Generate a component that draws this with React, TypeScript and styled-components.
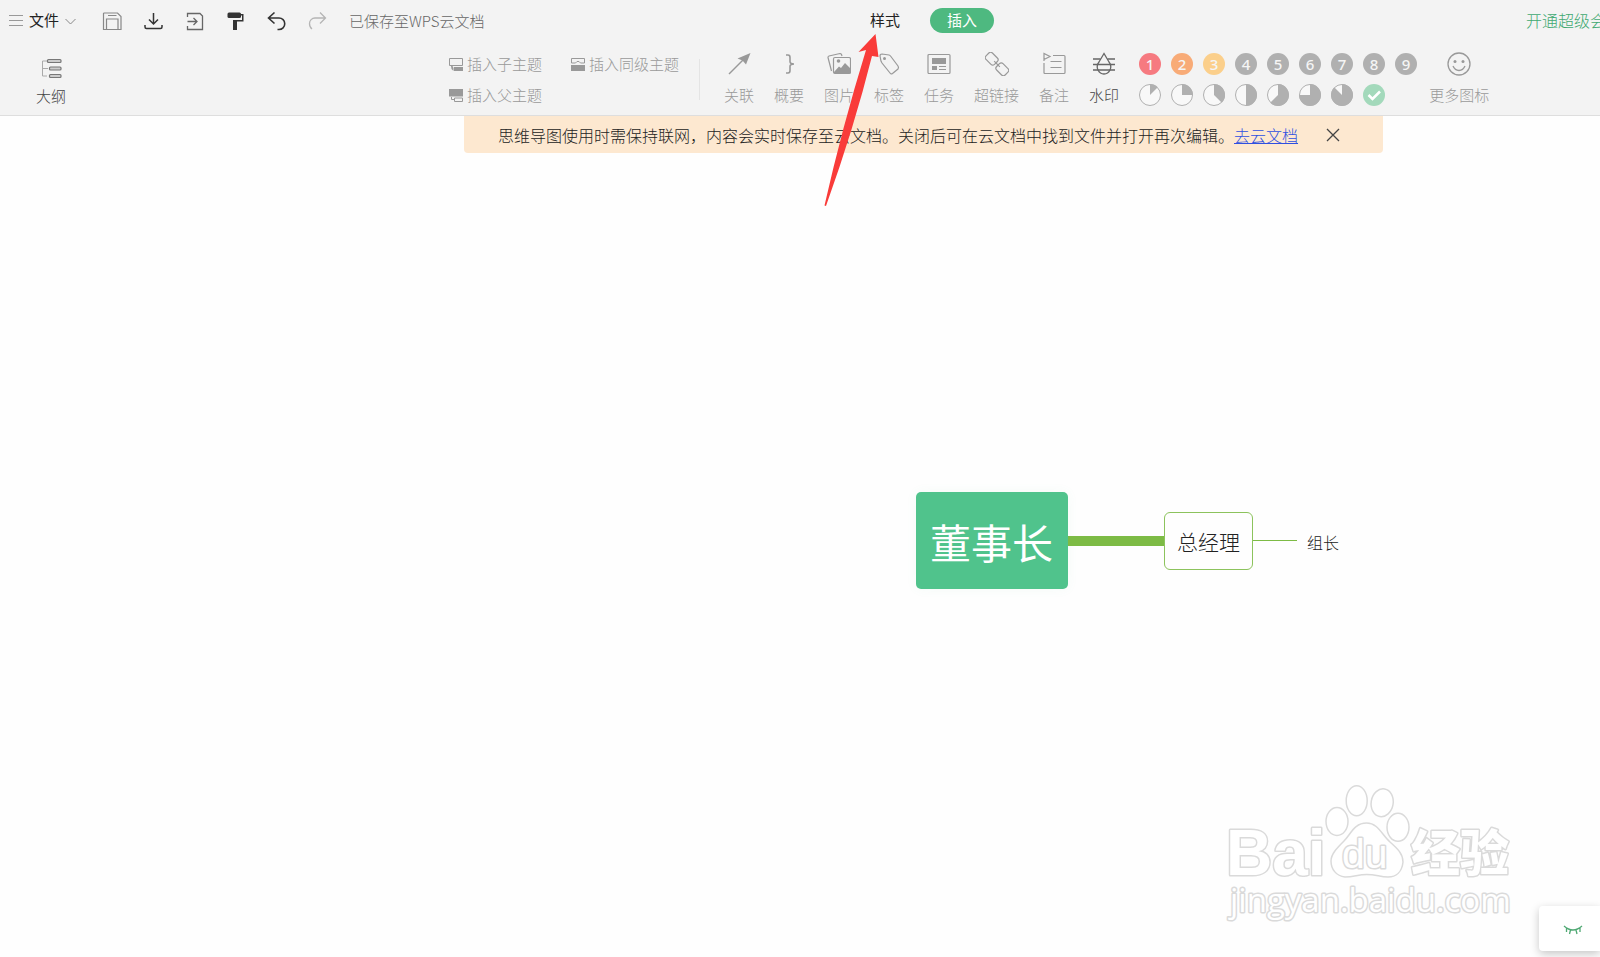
import React from "react";
import styled, { createGlobalStyle } from "styled-components";

const GlobalStyle = createGlobalStyle`
  *, *::before, *::after { box-sizing: border-box; }
  body {
    margin: 0;
    background: #fefefe;
    font-family: "Noto Sans CJK SC", "Liberation Sans", sans-serif;
    font-size: 15px;
    line-height: 20px;
    font-weight: 300;
    color: #222;
  }
  button {
    font: inherit;
    color: inherit;
    background: none;
    border: 0;
    padding: 0;
    cursor: pointer;
    white-space: nowrap;
  }
  svg { display: block; flex: none; }
`;

const Page = styled.div`
  position: relative;
  display: flex;
  flex-direction: column;
  min-height: 100vh;
  overflow: hidden;
`;

const Header = styled.header`
  background: #f3f3f3;
  border-bottom: 1px solid #dedede;
`;

const TopBar = styled.div`
  display: flex;
  align-items: center;
  height: 42px;
`;

const TopLeft = styled.div`
  display: flex;
  align-items: center;
  flex: 0 0 870px;
  padding-left: 8px;
`;

const FileMenu = styled.button`
  display: flex;
  align-items: center;
  gap: 6px;
  width: 94px;
  margin-bottom: 2px;
  color: #222;
  font-weight: 400;
`;

const QuickActions = styled.div`
  display: flex;
  gap: 21px;
`;

const QuickButton = styled.button<{ $muted?: boolean }>`
  color: ${(p) => (p.$muted ? "#b5b5b5" : "#333")};
`;

const SaveStatus = styled.span`
  margin-left: 22px;
  color: #666;
  white-space: nowrap;
`;

const Tabs = styled.nav`
  display: flex;
  align-items: center;
  gap: 30px;
  flex: 1;
  color: #222;
`;

const Tab = styled.button<{ $active?: boolean }>`
  height: 25px;
  padding: 0 ${(p) => (p.$active ? "17px" : "0")};
  margin-bottom: 2px;
  border-radius: 13px;
  font-weight: 400;
  background: ${(p) => (p.$active ? "#4eb980" : "none")};
  color: ${(p) => (p.$active ? "#fff" : "#222")};
`;

const Upgrade = styled.a`
  flex: none;
  width: 74px;
  margin-bottom: 2px;
  color: #3fa971;
  font-size: 16px;
  text-decoration: none;
  white-space: nowrap;
`;

const Toolbar = styled.div`
  display: flex;
  align-items: flex-start;
  height: 73px;
  padding-top: 10px;
  color: #999;
`;

const OutlineArea = styled.div`
  flex: 0 0 449px;
  padding: 4px 0 0 36px;
`;

const Tool = styled.button<{ $strong?: boolean; $gap?: number }>`
  display: flex;
  flex-direction: column;
  align-items: center;
  gap: ${(p) => p.$gap ?? 9}px;
  color: ${(p) => (p.$strong ? "#444" : "#999")};
`;

const InsertGroup = styled.div`
  display: grid;
  grid-template-columns: 122px auto;
  row-gap: 11px;
  flex: 0 0 250px;
  padding-top: 2px;
`;

const InsertButton = styled.button`
  display: flex;
  align-items: center;
  gap: 3px;
`;

const ToolGroup = styled.div`
  display: flex;
  gap: 20px;
  padding-left: 25px;
  position: relative;
  &::before {
    content: "";
    position: absolute;
    left: 0;
    top: 7px;
    height: 41px;
    border-left: 1px solid #e4e4e4;
  }
`;

const Markers = styled.div`
  display: grid;
  grid-template-columns: repeat(9, 22px);
  gap: 9px 10px;
  margin: 0 12px 0 20px;
  padding-top: 1px;
`;

const Marker = styled.button<{ $color?: string }>`
  display: grid;
  place-items: center;
  width: 22px;
  height: 22px;
  border-radius: 50%;
  background: ${(p) => p.$color ?? "none"};
  color: #f5f5f5;
  font-family: "Noto Sans", sans-serif;
  font-weight: 500;
`;

const Canvas = styled.main`
  position: relative;
  flex: 1;
`;

const Notice = styled.div`
  display: flex;
  align-items: center;
  width: 919px;
  height: 37px;
  margin-left: 464px;
  padding-left: 34px;
  background: #fde8d0;
  border-radius: 0 0 4px 4px;
  font-size: 16px;
  white-space: nowrap;
`;

const NoticeLink = styled.a`
  color: #2f50e0;
`;

const CloseButton = styled.button`
  margin-left: 28px;
  color: #444;
`;

const MindMap = styled.div`
  position: absolute;
  left: 916px;
  top: 376px;
  display: flex;
  align-items: center;
`;

const RootNode = styled.div`
  padding: 25px 15px 23px 14px;
  border-radius: 5px;
  background: #50c38c;
  color: #fff;
  font-size: 41px;
  line-height: 49px;
  font-weight: 400;
  box-shadow: 0 0 12px rgba(80, 195, 140, 0.06);
`;

const ChildNode = styled.div`
  padding: 17px 12px;
  border: 1px solid #8cc35c;
  border-radius: 6px;
  font-size: 21px;
  line-height: 22px;
`;

const LeafNode = styled.div`
  font-size: 16px;
  padding: 2px 0 0 10px;
`;

const Branch = styled.div<{ $width: number; $thick: number }>`
  width: ${(p) => p.$width}px;
  height: ${(p) => p.$thick}px;
  background: #7dbb45;
`;

const Pointer = styled.svg`
  position: absolute;
  left: 820px;
  top: 30px;
  pointer-events: none;
`;

const Watermark = styled.svg`
  position: absolute;
  right: 80px;
  bottom: 22px;
`;

const ViewToggle = styled.button`
  position: absolute;
  right: 0;
  bottom: 6px;
  display: grid;
  place-items: center;
  width: 61px;
  height: 45px;
  padding-left: 6px;
  border-radius: 4px 0 0 4px;
  background: #fff;
  color: #4fa873;
  box-shadow: 0 3px 10px rgba(0, 0, 0, 0.22);
`;

type IconProps = { size?: number; h?: number; sw?: number; children: React.ReactNode };

const Icon = ({ size = 24, h, sw = 1, children }: IconProps) => (
  <svg
    width={size}
    height={h ?? size}
    viewBox={`0 0 ${size} ${h ?? size}`}
    fill="none"
    stroke="currentColor"
    strokeWidth={sw}
    aria-hidden="true"
  >
    {children}
  </svg>
);

const quickActions = [
  {
    label: "保存",
    icon: (
      <g stroke="#888" strokeWidth="1.200">
        <path d="M2 2H15.500l3.500 3.500V18.500H1.500V2.500Z" />
        <path d="M4.500 18.500V8H16V18.500M6 4.500h8.500" />
      </g>
    ),
  },
  {
    label: "下载",
    icon: <path strokeWidth="1.500" d="M10.500 2v11M6 8.500l4.500 4.500L15 8.500M2 14v2q0 1.500 1.500 1.500h14q1.500 0 1.500-1.500v-2" />,
  },
  {
    label: "导出",
    icon: (
      <g stroke="#666" strokeWidth="1.300">
        <path d="M3.500 6V2.500H16L18.500 5v13.500H3.500V15M3.500 10.500h9M9.500 7l3.500 3.500L9.500 14" />
      </g>
    ),
  },
  {
    label: "格式刷",
    icon: (
      <g stroke="none" fill="currentColor">
        <rect x="2.500" y="1.500" width="13.500" height="5.500" rx="1.500" />
        <path d="M15 3h3.500v7.500H12v8.500H8V9h9V4.500H15Z" />
      </g>
    ),
  },
  {
    label: "撤销",
    icon: <path strokeWidth="1.600" d="M8.500 1.500 2.500 7l6 5.500M2.500 7H13a5.500 5.500 0 0 1 0 11.500H11.500" />,
  },
  {
    label: "重做",
    muted: true,
    icon: <path strokeWidth="1.300" d="M13 1.500 18.500 7 13 12.500M18.500 7H8A5.500 5.500 0 0 0 2.500 12.500c0 2.500 1 4.500 2.500 5.500" />,
  },
];

const tools = [
  {
    label: "关联",
    icon: (
      <>
        <path d="M2 22 16 8" strokeWidth="1.500" />
        <path d="M23.500 1 19 12.500l-3.500-4-5-2Z" fill="currentColor" stroke="none" />
      </>
    ),
  },
  {
    label: "概要",
    icon: <path strokeWidth="1.600" d="M9 3h2q2 0 2 2.500V9.500q0 2.500 4 2.500-4 0-4 2.500v4q0 2.500-2 2.500H9" />,
  },
  {
    label: "图片",
    icon: (
      <>
        <path d="M4.500 19 1 5.500Q.8 4.500 2 4L13 1.500q1 0 1.500 1L15 4" strokeWidth="1.200" />
        <rect x="6.500" y="5.500" width="17" height="16" rx="1.500" strokeWidth="1.200" fill="#f3f3f3" />
        <circle cx="11.500" cy="9" r="1.800" fill="currentColor" stroke="none" />
        <path d="M7 20l5-5.500 2 1.500 4-5 5.500 5.500V21.500H7Z" fill="currentColor" stroke="none" />
      </>
    ),
  },
  {
    label: "标签",
    icon: (
      <>
        <path strokeWidth="1.200" d="M3 4q0-2 2-2l7 1q1 .200 1.500 1L21 14q1 1.500 0 3l-5.500 4.500q-1.500 1-2.500-.500L5 11 4 9Z" />
        <circle cx="7.500" cy="6.500" r="1.500" fill="currentColor" stroke="none" />
      </>
    ),
  },
  {
    label: "任务",
    icon: (
      <>
        <rect x="1" y="2.500" width="22" height="19" rx="1" strokeWidth="1.200" />
        <path
          fill="currentColor"
          stroke="none"
          d="M5 6h14v6H5ZM5 14h5v4H5ZM12 14h7v1H12ZM12 17h7v1H12Z"
        />
      </>
    ),
  },
  {
    label: "超链接",
    icon: (
      <g strokeWidth="1.200" transform="rotate(45 12 12)">
        <rect x="-1.500" y="7.500" width="12" height="9" rx="2.500" />
        <rect x="13.500" y="7.500" width="12" height="9" rx="2.500" />
        <path d="M8 12h8" />
      </g>
    ),
  },
  {
    label: "备注",
    icon: (
      <g strokeWidth="1.200">
        <path d="M2 9V1.500L8 4.500 2 7.500M11 3.500h11q1 0 1 1V20.500q0 1-1 1H3q-1 0-1-1V11M8.500 9.500h11M8.500 15.500h11" />
      </g>
    ),
  },
  {
    label: "水印",
    strong: true,
    icon: (
      <g strokeWidth="1.300" stroke="#666">
        <path d="M12 1.500 7 10q-3 4-1 8 2 4 6 4t6-4q2-4-1-8Z" />
        <path d="M1 7h7.500M15.500 7H23M1 12.500h22M1 18h22" />
      </g>
    ),
  },
];

const priorityColors = ["#f67a80", "#f8ab77", "#fbcf8b"];

const insertIcons = {
  child: (
    <>
      <path d="M.5 1.500h13V8.500H.5Z" />
      <path d="M5 10h9v4H5ZM2 9h1.500l1 2v3L2.500 12Z" fill="currentColor" stroke="none" />
    </>
  ),
  sibling: (
    <>
      <path d="M.5 6V1.500h13V6H9.500L8 4.500H6L4.500 6Z" />
      <path d="M0 8h14v6H0Z" fill="currentColor" stroke="none" />
    </>
  ),
  parent: (
    <>
      <path d="M0 1h14v7.500H0Z" fill="currentColor" stroke="none" />
      <path d="M2.500 9v2.500H5M5.500 10h8v3.500h-8Z" />
    </>
  ),
};

const Pie = ({ part }: { part: number }) => {
  const a = (part / 8) * Math.PI * 2;
  const x = 11 + 11 * Math.sin(a);
  const y = 11 - 11 * Math.cos(a);
  return (
    <Icon size={22}>
      <circle cx="11" cy="11" r="10.500" fill="#f8f8f8" stroke="#b0b0b0" />
      <path
        d={`M11 11V0A11 11 0 ${part > 4 ? 1 : 0} 1 ${x} ${y}Z`}
        fill="#b0b0b0"
        stroke="none"
      />
    </Icon>
  );
};

export default function App() {
  return (
    <Page>
      <GlobalStyle />
      <Header>
        <TopBar>
          <TopLeft>
            <FileMenu>
              <Icon size={15} sw={1}>
                <path stroke="#999" d="M1 2.500h14M1 7.500h14M1 12.500h14" />
              </Icon>
              文件
              <Icon size={11}>
                <path stroke="#888" d="M.5 4 5.500 9 10.500 4" />
              </Icon>
            </FileMenu>
            <QuickActions>
              {quickActions.map((a) => (
                <QuickButton key={a.label} aria-label={a.label} $muted={a.muted}>
                  <Icon size={20}>{a.icon}</Icon>
                </QuickButton>
              ))}
            </QuickActions>
            <SaveStatus>已保存至WPS云文档</SaveStatus>
          </TopLeft>
          <Tabs>
            <Tab>样式</Tab>
            <Tab $active>插入</Tab>
          </Tabs>
          <Upgrade href="#vip">开通超级会</Upgrade>
        </TopBar>
        <Toolbar>
          <OutlineArea>
            <Tool $strong $gap={6}>
              <Icon size={24}>
                <path stroke="#aaa" d="M8 5H3.500V20H8M3.500 12.500H9" />
                <g strokeWidth="1.200" fill="#ccc" stroke="#777">
                  <rect x="8.500" y="3.500" width="13.500" height="3" rx="1" />
                  <rect x="10.500" y="11" width="11.500" height="3" rx="1" />
                  <rect x="10.500" y="18.500" width="11.500" height="3" rx="1" />
                </g>
              </Icon>
              大纲
            </Tool>
          </OutlineArea>
          <InsertGroup>
            <InsertButton>
              <Icon size={15}>{insertIcons.child}</Icon>
              插入子主题
            </InsertButton>
            <InsertButton>
              <Icon size={15}>{insertIcons.sibling}</Icon>
              插入同级主题
            </InsertButton>
            <InsertButton>
              <Icon size={15}>{insertIcons.parent}</Icon>
              插入父主题
            </InsertButton>
          </InsertGroup>
          <ToolGroup>
            {tools.map((t) => (
              <Tool key={t.label} $strong={t.strong}>
                <Icon size={24}>{t.icon}</Icon>
                {t.label}
              </Tool>
            ))}
          </ToolGroup>
          <Markers>
            {[1, 2, 3, 4, 5, 6, 7, 8, 9].map((n) => (
              <Marker key={n} $color={priorityColors[n - 1] ?? "#b0b0b0"}>
                {n}
              </Marker>
            ))}
            {[1, 2, 3, 4, 5, 6, 7].map((n) => (
              <Marker key={n} aria-label={`进度 ${n}/8`}>
                <Pie part={n} />
              </Marker>
            ))}
            <Marker $color="#a3d9bb" aria-label="完成">
              <Icon size={22} sw={2.5}>
                <path stroke="#fff" d="M5.500 11 9.500 15 17 7.500" />
              </Icon>
            </Marker>
          </Markers>
          <Tool>
            <Icon size={24}>
              <circle cx="12" cy="12" r="11" strokeWidth="1.300" />
              <path strokeWidth="1.300" d="M6 14q2 4.500 6 4.500t6-4.500" />
              <circle cx="8" cy="9.500" r="1.500" fill="currentColor" stroke="none" />
              <circle cx="16" cy="9.500" r="1.500" fill="currentColor" stroke="none" />
            </Icon>
            更多图标
          </Tool>
        </Toolbar>
      </Header>
      <Canvas>
        <Notice>
          <span>思维导图使用时需保持联网，内容会实时保存至云文档。关闭后可在云文档中找到文件并打开再次编辑。</span>
          <NoticeLink href="#cloud">去云文档</NoticeLink>
          <CloseButton aria-label="关闭">
            <Icon size={14} sw={1.3}>
              <path d="M1 1 13 13M13 1 1 13" />
            </Icon>
          </CloseButton>
        </Notice>
        <MindMap>
          <RootNode>董事长</RootNode>
          <Branch $width={96} $thick={10} />
          <ChildNode>总经理</ChildNode>
          <Branch $width={44} $thick={1} />
          <LeafNode>组长</LeafNode>
        </MindMap>
        <Watermark width="300" height="160" viewBox="1220 775 300 160" aria-hidden="true">
          <g fill="#fff" stroke="#dadada" strokeWidth="1.500">
            <ellipse cx="1337" cy="821.500" rx="11" ry="14" />
            <ellipse cx="1356.700" cy="800.700" rx="10.500" ry="15" />
            <ellipse cx="1382.300" cy="802.700" rx="11" ry="14" transform="rotate(10 1382 802)" />
            <ellipse cx="1398" cy="827.300" rx="11" ry="14" />
            <path d="M1366.700 823C1378 823 1382 835 1390 842 1398 849 1403 854 1403 862 1402 872 1396 877 1388 877 1380 877 1376 874.500 1366.700 874.500 1358 874.500 1354 877 1345 877 1336 876 1331 869 1331 861 1331 854 1337 848 1344 841 1351 834 1354 823 1366.700 823Z" />
          </g>
          <g fill="#fff" stroke="#dadada" strokeWidth="3" paintOrder="stroke" strokeLinejoin="round">
            <text x="1226" y="875" fontFamily="Liberation Sans" fontWeight="700" fontSize="64">
              Bai
            </text>
            <text x="1342" y="868" fontFamily="Liberation Sans" fontWeight="400" fontSize="41">
              du
            </text>
            <text x="1411" y="871" fontFamily="Noto Sans CJK SC" fontWeight="900" fontSize="49">
              经验
            </text>
            <text x="1230" y="912" fontFamily="Open Sans" fontWeight="400" fontSize="33">
              jingyan.baidu.com
            </text>
          </g>
        </Watermark>
        <ViewToggle aria-label="隐藏工具">
          <Icon size={20} sw={1.3}>
            <path d="M1 7q9 8 18 0M3.500 9v4M7.500 11l-1 4M13 11l1 4M17 9v4" />
          </Icon>
        </ViewToggle>
      </Canvas>
      <Pointer width="64" height="180" viewBox="820 30 64 180" aria-hidden="true">
        <path d="M875.500 34 878.500 57 872 56Q854 128 826 206L824.500 205.500Q842 128 866 50L858.500 52Z" fill="#f93b39" />
      </Pointer>
    </Page>
  );
}
